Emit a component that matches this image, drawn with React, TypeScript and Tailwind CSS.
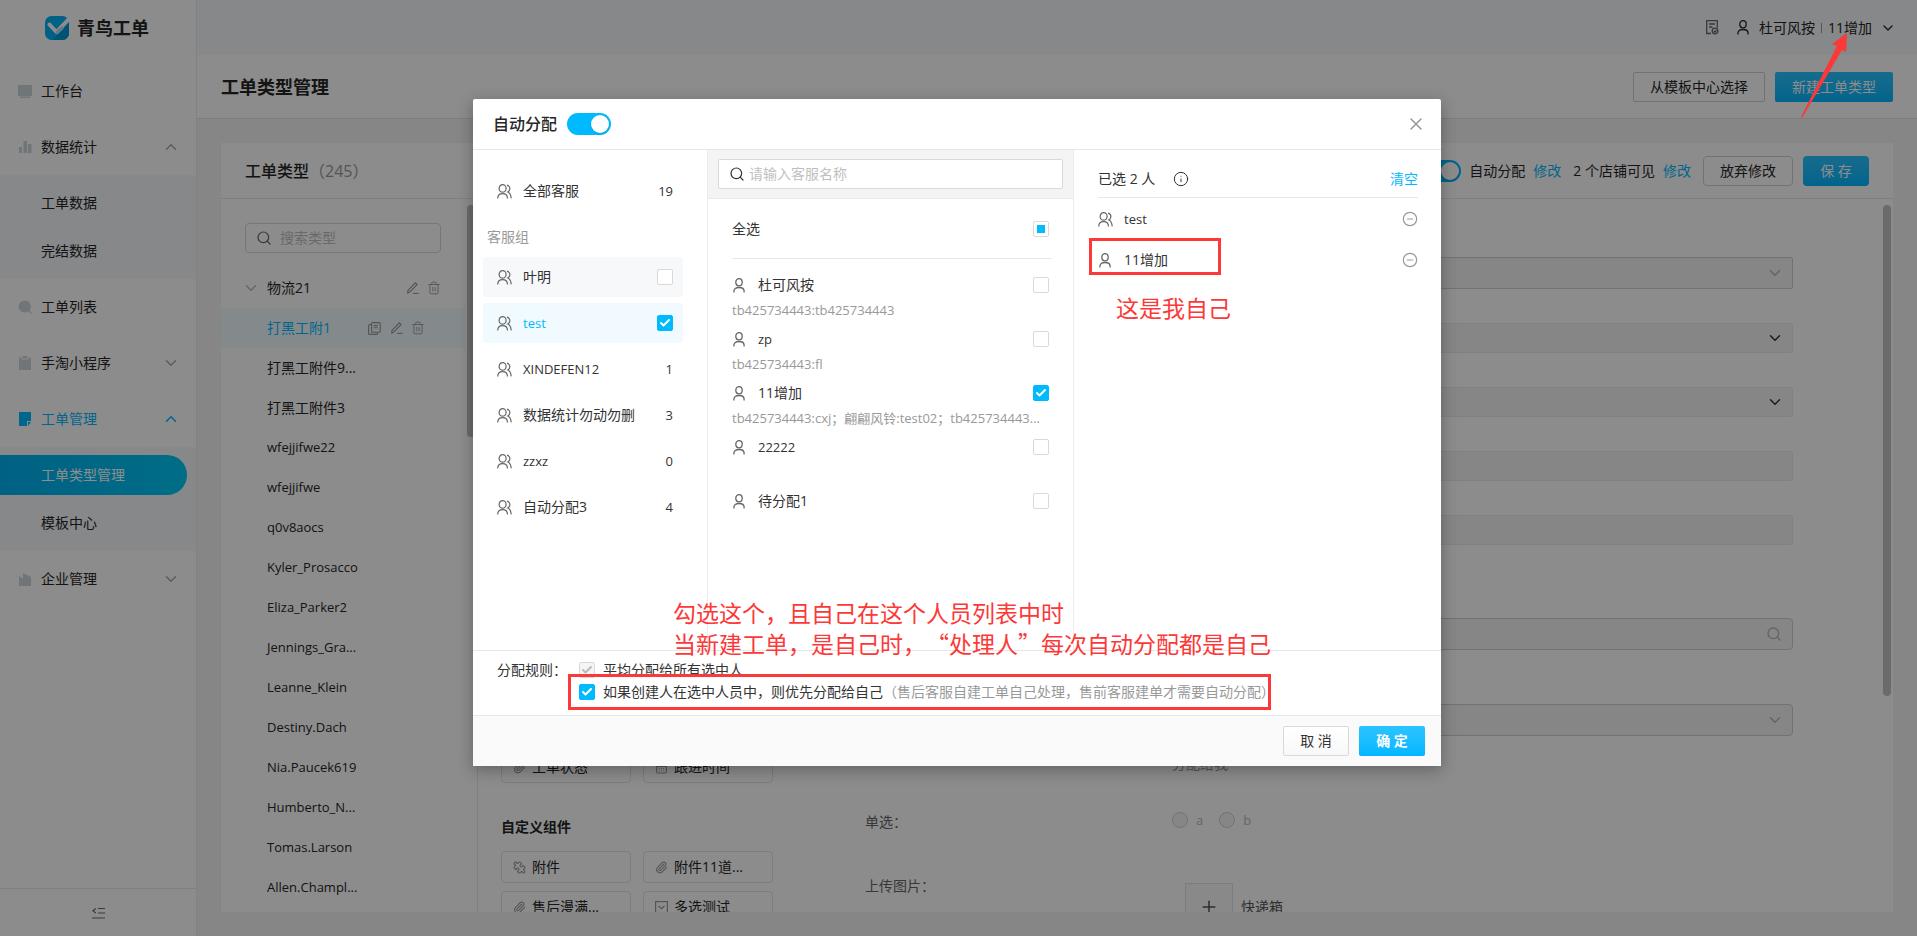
import { useState, type ReactNode } from "react";
import { ChevronDown, ChevronUp, Search, X, Info, CircleMinus, Paperclip, Puzzle, Plus, CalendarDays, Trash2, Check } from "lucide-react";

const UserIcon = ({ className = "" }: { className?: string }) => (
    <svg width="12" height="15" viewBox="0 0 12 15" fill="none" stroke="currentColor" strokeWidth="1.3" className={`shrink-0 ${className}`}>
        <ellipse cx="6" cy="4.2" rx="3.2" ry="3.6" />
        <path d="M0.9 14.6v-1.400c0-2.300 1.900-3.700 5.100-3.700s5.100 1.400 5.100 3.700v1.400" />
    </svg>
);

const UsersIcon = () => (
    <svg width="15" height="15" viewBox="0 0 15 15" fill="none" stroke="currentColor" strokeWidth="1.2" className="shrink-0 text-[#666]">
        <ellipse cx="5.6" cy="4.4" rx="3.5" ry="3.7" />
        <path d="M0.7 14.4c0.1-3 2-4.8 4.9-4.8s4.8 1.8 4.9 4.8" />
        <path d="M10 1.2c1.9 0.5 2.9 1.7 2.9 3.3S12 7.300 10.800 8c2 0.900 3.200 3.200 3.400 6.400" />
    </svg>
);

const EditIcon = () => (
    <svg width="12" height="12" viewBox="0 0 12 12" fill="none" stroke="currentColor" strokeWidth="1.1">
        <path d="M1 8.300 8.400 0.900l1.700 1.700L2.800 10 0.700 11z" />
        <path d="M6 11.400h5.600" />
    </svg>
);

const CopyIcon = () => (
    <svg width="13" height="13" viewBox="0 0 13 13" fill="none" stroke="currentColor" strokeWidth="1.1">
        <rect x="3.600" y="0.600" width="8.600" height="9.600" rx="1" />
        <path d="M5.800 3.600h4M5.800 5.800h4M3.600 2.600H1.600a1 1 0 0 0-1 1v7.800a1 1 0 0 0 1 1h7a1 1 0 0 0 1-1v-1" />
    </svg>
);

const Logo = () => (
    <svg width="24" height="24" viewBox="0 0 24 24">
        <rect width="24" height="24" rx="6.500" fill="#00b0f5" />
        <path d="M24 7v10.500a6.500 6.500 0 0 1-6.500 6.500H8z" fill="#0094d2" />
        <path d="M4.500 8.500 11.500 16 23 4" fill="none" stroke="#fff" strokeWidth="4" strokeLinecap="round" strokeLinejoin="round" />
        <path d="M12.500 13.500l5-3.500 1.500 2.500-6.500 6-2-2z" fill="#a9dff7" />
    </svg>
);

const menuIcons: { [key: string]: ReactNode } = {
    desk: <path d="M0 1h14v11H0zM2 12.500h10v1.500H2z" />,
    chart: <path d="M1 7h3v6H1zM5.500 1h3.500v12H5.500zM10 4h3.500v9H10z" />,
    search: <path d="M6.500 0.500a6 6 0 1 0 3.700 10.800l3 2.700 0.800-0.800-2.500-3A6 6 0 0 0 6.500 0.500z" />,
    clip: <path d="M1 1.500h2.500v2h7v-2H13V14H1zM4.500 0h5v2.500h-5z" />,
    note: <path d="M1 0h12v9H9v5H1zM10 10h3l-3 4z" />,
    company: <path d="M1 4l4 2.500V1l8 4v9H1z" />,
};

const menu = [
    { label: "工作台", icon: "desk" },
    { label: "数据统计", icon: "chart", open: true, children: ["工单数据", "完结数据"] },
    { label: "工单列表", icon: "search" },
    { label: "手淘小程序", icon: "clip", open: false },
    { label: "工单管理", icon: "note", open: true, active: true, children: ["工单类型管理", "模板中心"] },
    { label: "企业管理", icon: "company", open: false },
];

const ticketTypes = [
    "打黑工附件9...",
    "打黑工附件3",
    "wfejjifwe22",
    "wfejjifwe",
    "q0v8aocs",
    "Kyler_Prosacco",
    "Eliza_Parker2",
    "Jennings_Gra...",
    "Leanne_Klein",
    "Destiny.Dach",
    "Nia.Paucek619",
    "Humberto_N...",
    "Tomas.Larson",
    "Allen.Champl...",
];

const groups = [
    { name: "叶明", box: true, row: "bg-[#f7f8fa]" },
    { name: "test", box: true, row: "bg-[#f0faff] text-[#00baff]" },
    { name: "XINDEFEN12", count: 1, row: "" },
    { name: "数据统计勿动勿删", count: 3, row: "" },
    { name: "zzxz", count: 0, row: "" },
    { name: "自动分配3", count: 4, row: "" },
];

const people = [
    { name: "杜可风按", accounts: "tb425734443:tb425734443" },
    { name: "zp", accounts: "tb425734443:fl" },
    { name: "11增加", accounts: "tb425734443:cxj；翩翩风铃:test02；tb425734443..." },
    { name: "22222", accounts: "" },
    { name: "待分配1", accounts: "" },
];

// latin-only names are set one step smaller than mixed ones
const nameSize = (name: string) => (/^[\x20-\x7e]+$/.test(name) ? "text-[13px]" : "text-sm");

const Checkbox = ({ label, checked, onChange, disabled = false }: { label: string; checked: boolean; onChange?: () => void; disabled?: boolean }) => (
    <span className="relative flex size-4 shrink-0">
        <input
            type="checkbox"
            aria-label={label}
            checked={checked}
            disabled={disabled}
            onChange={onChange}
            className="size-4 appearance-none rounded-xs border border-[#d9d9d9] bg-white checked:border-[#00baff] checked:bg-[#00baff] disabled:border-[#d9d9d9] disabled:bg-[#f5f5f5]"
        />
        {checked && (
            <Check size={12} strokeWidth={4} className={`pointer-events-none absolute top-0.5 left-0.5 ${disabled ? "text-[#bbb]" : "text-white"}`} />
        )}
    </span>
);

const Toggle = ({ label }: { label: string }) => {
    const [on, setOn] = useState(true);
    return (
        <button
            role="switch"
            aria-checked={on}
            aria-label={label}
            onClick={() => setOn(!on)}
            className={`flex h-[22px] w-11 items-center rounded-full p-0.5 ${on ? "justify-end bg-[#00baff]" : "justify-start bg-gray-300"}`}
        >
            <span className="size-[18px] rounded-full bg-white shadow-sm" />
        </button>
    );
};

const Sidebar = () => (
    <aside className="flex w-[197px] shrink-0 flex-col border-r border-[#ececec] bg-white">
        <div className="mb-2 flex h-[55px] items-center justify-center gap-2 pr-0.5">
            <Logo />
            <span className="text-lg font-bold">青鸟工单</span>
        </div>
        <nav className="flex-1">
            {menu.map((item) => (
                <div key={item.label}>
                    <a href="#" className={`flex h-14 items-center pr-4 pl-[18px] text-sm ${item.active ? "text-[#00baff]" : ""}`}>
                        <svg width="14" height="14" viewBox="0 0 14 14" fill="currentColor" className={item.active ? "" : "text-[#ccd5da]"}>
                            {menuIcons[item.icon]}
                        </svg>
                        <span className="ml-[9px] flex-1">{item.label}</span>
                        {item.open === true && <ChevronUp size={18} className={item.active ? "" : "text-[#aaa]"} />}
                        {item.open === false && <ChevronDown size={18} className="text-[#aaa]" />}
                    </a>
                    {item.children && (
                        <div className="flex flex-col gap-2 bg-[#f4f7fa] py-2">
                            {item.children.map((child) => (
                                <a
                                    key={child}
                                    href="#"
                                    className={`mr-[9px] flex h-10 items-center pl-[41px] text-sm ${
                                        child === "工单类型管理" ? "rounded-r-full bg-linear-to-r from-[#00b0f0] to-[#00c8f5] text-white" : ""
                                    }`}
                                >
                                    {child}
                                </a>
                            ))}
                        </div>
                    )}
                </div>
            ))}
        </nav>
        <button aria-label="收起菜单" className="flex h-12 items-center justify-center border-t border-[#e8e8e8] text-[#666]">
            <svg width="13" height="12" viewBox="0 0 13 12" fill="none" stroke="currentColor" strokeWidth="1.200">
                <path d="M6 1.500h7M6 6h7M0 11h13M3.800 1.500 1 3.800l2.800 2.300" />
            </svg>
        </button>
    </aside>
);

const TypeList = () => (
    <section className="relative flex w-[257px] shrink-0 flex-col overflow-hidden border-r border-[#e8e8e8]">
        <div className="flex h-14 shrink-0 items-center border-b border-[#e8e8e8] pl-6 text-base">
            <h2 className="font-medium">工单类型</h2>
            <span className="text-[#999]">（245）</span>
        </div>
        <label className="mx-6 mt-6 mb-[15px] flex h-[30px] w-[196px] shrink-0 items-center gap-2 rounded border border-[#d9d9d9] pr-3 pl-2.5 text-[#666]">
            <Search size={16} strokeWidth={1.8} className="shrink-0" />
            <input aria-label="搜索类型" placeholder="搜索类型" className="w-full text-sm outline-none placeholder:text-[#bfbfbf]" />
        </label>
        <div className="flex h-10 shrink-0 items-center pr-9 pl-[21px] text-[#999]">
            <ChevronDown size={18} className="text-[#bbb]" />
            <span className="ml-[7px] flex-1 text-sm text-[#262626]">物流21</span>
            <button aria-label="编辑"><EditIcon /></button>
            <button aria-label="删除" className="ml-2"><Trash2 size={14} strokeWidth={1.5} /></button>
        </div>
        <div className="mr-3 flex h-10 shrink-0 items-center bg-[#f0faff] pr-10 pl-[46px] text-[#999]">
            <span className="flex-1 text-sm text-[#00baff]">打黑工附1</span>
            <button aria-label="复制"><CopyIcon /></button>
            <button aria-label="编辑" className="ml-2.5"><EditIcon /></button>
            <button aria-label="删除" className="ml-2"><Trash2 size={14} strokeWidth={1.5} /></button>
        </div>
        {ticketTypes.map((name) => (
            <div key={name} className={`flex h-10 shrink-0 items-center pl-[46px] ${nameSize(name)}`}>
                {name}
            </div>
        ))}
        <div className="absolute top-[62px] right-0.5 h-[232px] w-2 rounded-full bg-[#c4c4c4]" />
    </section>
);

const WidgetButton = ({ icon, label }: { icon: ReactNode; label: string }) => (
    <button className="flex h-8 items-center gap-1.5 rounded border border-[#e4e4e4] pl-[11px] text-left text-sm">
        <span className="text-[#999]">{icon}</span>
        {label}
    </button>
);

const Palette = () => (
    <section className="flex w-[319px] shrink-0 flex-col overflow-hidden pt-[552px] pr-6 pl-[23px]">
        <div className="grid grid-cols-2 gap-x-3">
            <WidgetButton icon={<Paperclip size={13} />} label="工单状态" />
            <WidgetButton icon={<CalendarDays size={13} />} label="跟进时间" />
        </div>
        <h3 className="mt-8 mb-3 text-sm leading-6 font-bold">自定义组件</h3>
        <div className="grid grid-cols-2 gap-x-3 gap-y-2">
            <WidgetButton
                icon={<Puzzle size={13} className="rotate-90" />}
                label="附件"
            />
            <WidgetButton icon={<Paperclip size={13} />} label="附件11道..." />
            <WidgetButton icon={<Paperclip size={13} />} label="售后漫满..." />
            <WidgetButton
                icon={
                    <svg width="13" height="13" viewBox="0 0 13 13" fill="none" stroke="currentColor" strokeWidth="1.200">
                        <rect x="0.600" y="0.600" width="11.800" height="11.800" />
                        <path d="M3.500 5l3 2.800 3-2.800" />
                    </svg>
                }
                label="多选测试"
            />
        </div>
    </section>
);

const SelectField = ({ label, className, tone }: { label: string; className: string; tone: string }) => (
    <div className="relative">
        <select disabled aria-label={label} className={`block w-full appearance-none border bg-[#f5f5f5] ${className}`} />
        <ChevronDown size={18} className={`absolute top-1/2 right-[9px] -translate-y-1/2 ${tone}`} />
    </div>
);

const FormPreview = () => (
    <section className="relative grid flex-1 grid-cols-[307px_1fr] content-start overflow-hidden pt-[58px] pr-[100px] pl-[68px] text-sm">
        <div className="col-start-2 flex flex-col gap-[34px]">
            <SelectField label="店铺" className="h-8 rounded-xs border-[#d0d0d0]" tone="text-[#b5b5b5]" />
            <SelectField label="平台" className="h-[30px] rounded-xs border-[#ececec]" tone="text-[#333]" />
            <SelectField label="状态" className="h-[30px] rounded-xs border-[#ececec]" tone="text-[#333]" />
            <input disabled aria-label="订单号" className="h-[30px] rounded-xs border border-[#ececec] bg-[#f5f5f5]" />
            <input disabled aria-label="备注" className="h-[30px] rounded-xs border border-[#ececec] bg-[#f5f5f5]" />
        </div>
        <div className="relative col-start-2 mt-[73px]">
            <input disabled aria-label="查询" className="block h-8 w-full rounded border border-[#cfcfcf] bg-[#f5f5f5]" />
            <Search size={16} className="absolute top-2 right-[11px] text-[#b5b5b5]" />
        </div>
        <div className="col-start-2 mt-[54px]">
            <SelectField label="处理人" className="h-8 rounded border-[#cfcfcf]" tone="text-[#b5b5b5]" />
            <p className="mt-4 leading-6 text-[#999]">分配给我</p>
        </div>
        <span className="col-start-1 mt-[34px] leading-6 text-[#666]">单选：</span>
        <div className="mt-8 flex h-6 items-center gap-2 text-[13px] text-[#bbb]">
            <input type="radio" disabled id="opt-a" name="opt" className="size-4 appearance-none rounded-full border border-[#cfcfcf] bg-[#f5f5f5]" />
            <label htmlFor="opt-a" className="mr-2">a</label>
            <input type="radio" disabled id="opt-b" name="opt" className="size-4 appearance-none rounded-full border border-[#cfcfcf] bg-[#f5f5f5]" />
            <label htmlFor="opt-b">b</label>
        </div>
        <span className="mt-10 leading-6 text-[#666]">上传图片：</span>
        <div className="mt-[49px] flex items-center gap-2 pl-[13px] text-[#555]">
            <button aria-label="上传快递箱" className="flex size-12 items-center justify-center border border-[#e2e2e2] bg-[#fafafa]">
                <Plus size={20} strokeWidth={1.8} />
            </button>
            快递箱
        </div>
        <div className="absolute top-1.5 right-0.5 h-[491px] w-2 rounded-full bg-[#c4c4c4]" />
    </section>
);

const AssignModal = () => {
    const [checkedGroups, setCheckedGroups] = useState<string[]>(["test"]);
    const [checkedPeople, setCheckedPeople] = useState<string[]>(["11增加"]);
    const [preferSelf, setPreferSelf] = useState(true);

    const toggle = (list: string[], name: string) => (list.includes(name) ? list.filter((n) => n !== name) : [...list, name]);

    return (
        <div role="dialog" aria-label="自动分配" className="relative w-[968px] rounded-xs bg-white text-sm text-[#333] shadow-[0_4px_16px_rgba(0,0,0,0.3)]">
            <header className="flex h-[51px] items-center gap-2.5 border-b border-[#e8e8e8] pr-[15px] pl-5">
                <h2 className="text-base font-medium text-[#262626]">自动分配</h2>
                <Toggle label="自动分配" />
                <button aria-label="关闭" className="ml-auto text-[#999]"><X size={20} strokeWidth={1.8} /></button>
            </header>

            <div className="flex h-[500px]">
                {/* Groups */}
                <div className="w-[235px] shrink-0 border-r border-[#ececec] pt-[21px] pl-2.5">
                    <div className="flex h-10 w-[200px] items-center gap-[11px] pr-2.5 pl-3.5">
                        <UsersIcon />
                        <span className="flex-1">全部客服</span>
                        <span className="text-[13px]">19</span>
                    </div>
                    <p className="mt-4 mb-2.5 pl-1 leading-5 text-[#999]">客服组</p>
                    <div className="flex flex-col gap-1.5">
                        {groups.map((group) => (
                            <div key={group.name} className={`flex h-10 w-[200px] items-center gap-[11px] rounded pr-2.5 pl-3.5 ${group.row}`}>
                                <UsersIcon />
                                <span className={`flex-1 ${nameSize(group.name)}`}>{group.name}</span>
                                {group.box ? (
                                    <Checkbox
                                        label={group.name}
                                        checked={checkedGroups.includes(group.name)}
                                        onChange={() => setCheckedGroups(toggle(checkedGroups, group.name))}
                                    />
                                ) : (
                                    <span className="text-[13px]">{group.count}</span>
                                )}
                            </div>
                        ))}
                    </div>
                </div>

                {/* People */}
                <div className="w-[366px] shrink-0 border-r border-[#ececec]">
                    <div className="border-b border-[#ececec] bg-[#f4f4f4] px-2.5 py-[9px]">
                        <label className="flex h-[30px] items-center gap-1 rounded-xs border border-[#d9d9d9] bg-white px-2.5">
                            <Search size={16} strokeWidth={1.8} className="shrink-0" />
                            <input aria-label="请输入客服名称" placeholder="请输入客服名称" className="w-full outline-none placeholder:text-[#bfbfbf]" />
                        </label>
                    </div>
                    <div className="mx-6 flex h-[60px] w-[320px] items-center justify-between border-b border-[#e8e8e8] pr-[3px]">
                        全选
                        <button role="checkbox" aria-checked="mixed" aria-label="全选" className="flex size-4 items-center justify-center rounded-xs border border-[#d9d9d9]">
                            <span className="size-2 bg-[#00baff]" />
                        </button>
                    </div>
                    <ul className="mx-6 mt-3.5 w-[317px]">
                        {people.map((person) => (
                            <li key={person.name} className="h-[54px]">
                                <div className="flex h-6 items-center">
                                    <UserIcon className="ml-px text-[#666]" />
                                    <span className={`ml-[13px] flex-1 ${nameSize(person.name)}`}>{person.name}</span>
                                    <Checkbox
                                        label={person.name}
                                        checked={checkedPeople.includes(person.name)}
                                        onChange={() => setCheckedPeople(toggle(checkedPeople, person.name))}
                                    />
                                </div>
                                <p className="truncate text-[13px] leading-[26px] text-[#999]">{person.accounts}</p>
                            </li>
                        ))}
                    </ul>
                </div>

                {/* Selected */}
                <div className="flex-1 pr-[23px] pl-6">
                    <div className="flex h-12 items-end border-b border-[#e8e8e8] pb-2 leading-5">
                        已选 2 人
                        <Info size={16} strokeWidth={1.5} className="mb-0.5 ml-[18px]" />
                        <button className="ml-auto text-[#00baff]">清空</button>
                    </div>
                    <div className="flex h-[42px] items-center">
                        <UsersIcon />
                        <span className="ml-[11px] flex-1 text-[13px]">test</span>
                        <button aria-label="移除 test" className="text-[#999]"><CircleMinus size={16} strokeWidth={1.8} /></button>
                    </div>
                    <div className="flex h-10 items-center">
                        <UserIcon className="ml-px text-[#666]" />
                        <span className="ml-[13px] flex-1">11增加</span>
                        <button aria-label="移除 11增加" className="text-[#999]"><CircleMinus size={16} strokeWidth={1.8} /></button>
                    </div>
                </div>
            </div>

            <div className="flex h-[66px] border-y border-[#e8e8e8] pt-2 pl-6">
                <span className="w-[82px] leading-[22px]">分配规则：</span>
                <div>
                    <div className="flex h-[22px] items-center gap-2">
                        <Checkbox label="平均分配给所有选中人" checked disabled />
                        平均分配给所有选中人
                    </div>
                    <div className="flex h-[22px] items-center gap-2">
                        <Checkbox label="如果创建人在选中人员中，则优先分配给自己" checked={preferSelf} onChange={() => setPreferSelf(!preferSelf)} />
                        <span>
                            如果创建人在选中人员中，则优先分配给自己<span className="text-[#999]">（售后客服自建工单自己处理，售前客服建单才需要自动分配）</span>
                        </span>
                    </div>
                </div>
            </div>

            <footer className="flex h-[50px] items-center justify-end gap-2.5 bg-[#fafafa] pr-4">
                <button className="h-[30px] w-[66px] rounded-xs border border-[#d9d9d9] bg-linear-to-b from-white to-[#f8f8f8]">取 消</button>
                <button className="h-[30px] w-[66px] rounded-xs bg-linear-to-b from-[#29c4ff] to-[#00b7ff] font-bold text-white">确 定</button>
            </footer>

            {/* Annotations */}
            <div className="pointer-events-none font-['Noto_Sans_CJK_SC',sans-serif] text-[23px] leading-[31px] text-[#fc3838] [text-spacing-trim:space-all]">
                <div className="absolute top-[139px] left-[616px] h-[37px] w-[132px] border-3 border-[#fc3838]" />
                <p className="absolute top-[193px] left-[643px]">这是我自己</p>
                <p className="absolute top-[498px] left-[200px] whitespace-nowrap">
                    勾选这个，且自己在这个人员列表中时
                    <br />
                    当新建工单，是自己时，“处理人”每次自动分配都是自己
                </p>
                <div className="absolute top-[575px] left-[95px] h-9 w-[703px] border-3 border-[#fc3838]" />
            </div>
        </div>
    );
};

export default function App() {
    return (
        <div lang="zh-CN" className="relative flex h-screen overflow-hidden bg-[#f4f4f4] font-['Open_Sans','Noto_Sans_CJK_SC',sans-serif] text-[#262626]">
            <Sidebar />
            <div className="flex min-w-0 flex-1 flex-col">
                <div className="flex h-[55px] shrink-0 items-center justify-end bg-[#f4f7fa] pr-[21px] text-sm">
                    <button aria-label="记录">
                        <svg width="13" height="15" viewBox="0 0 13 15" fill="none" stroke="#666" strokeWidth="1.300">
                            <path d="M5 13.500H0.700V0.700h10.600v7M3 4h6M3 7h3.500" />
                            <circle cx="9" cy="11" r="2.800" />
                            <path d="M7.800 11l1 1 1.600-1.800" />
                        </svg>
                    </button>
                    <UserIcon className="ml-[18px]" />
                    <span className="ml-2.5">杜可风按</span>
                    <span className="mx-1.5 h-2.5 w-px bg-[#999]" />
                    <span>11增加</span>
                    <ChevronDown size={16} className="ml-2" />
                </div>
                <div className="flex h-16 shrink-0 items-center border-b border-[#e4e4e4] bg-white px-6 text-sm">
                    <h1 className="flex-1 text-lg font-bold">工单类型管理</h1>
                    <button className="h-[30px] w-[132px] rounded-xs border border-[#d0d0d0]">从模板中心选择</button>
                    <button className="ml-2.5 h-[30px] w-[118px] rounded-xs bg-linear-to-b from-[#29c4ff] to-[#00b7ff] text-white">新建工单类型</button>
                </div>
                <main className="m-6 flex min-h-0 flex-1 bg-white">
                    <TypeList />
                    <div className="flex min-w-0 flex-1 flex-col">
                        <div className="flex h-14 shrink-0 items-center justify-end border-b border-[#e8e8e8] pr-6 text-sm">
                            <Toggle label="自动分配开关" />
                            <span className="ml-2">自动分配</span>
                            <a href="#" className="ml-2 text-[#00baff]">修改</a>
                            <span className="ml-3">2 个店铺可见</span>
                            <a href="#" className="ml-2 text-[#00baff]">修改</a>
                            <button className="ml-3 h-[30px] w-[90px] rounded border border-[#d0d0d0]">放弃修改</button>
                            <button className="ml-2.5 h-[30px] w-[66px] rounded bg-linear-to-b from-[#29c4ff] to-[#00b7ff] text-white">保 存</button>
                        </div>
                        <div className="flex min-h-0 flex-1">
                            <Palette />
                            <FormPreview />
                        </div>
                    </div>
                </main>
            </div>

            <div className="absolute inset-0 flex items-start justify-center bg-black/45 pt-[99px] pr-[3px]">
                <AssignModal />
            </div>

            <svg width="50" height="88" viewBox="0 0 50 88" className="pointer-events-none absolute top-8 right-[67px]">
                <path d="M47 1 32 12 37 14 1 85 2 86 42 18 46 20z" fill="#fc3838" />
            </svg>
        </div>
    );
}
